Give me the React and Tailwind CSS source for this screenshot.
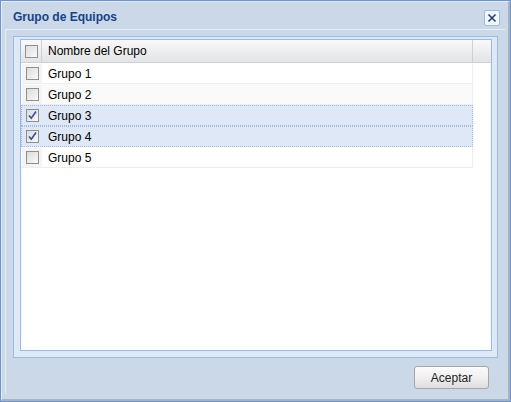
import React from 'react';

const grupos = [
  { id: 1, name: 'Grupo 1', checked: false },
  { id: 2, name: 'Grupo 2', checked: false },
  { id: 3, name: 'Grupo 3', checked: true },
  { id: 4, name: 'Grupo 4', checked: true },
  { id: 5, name: 'Grupo 5', checked: false },
];

// Little ExtJS-ish checkbox
const Check = ({ checked }) => (
  <div className="w-[13px] h-[13px] border border-[#8e8f8f] bg-gradient-to-br from-[#dcdcdc] to-[#f9f9f9] relative">
    {checked && (
      <svg className="absolute left-0 top-0" width="11" height="11" viewBox="0 0 11 11">
        <path d="M2 5.5 L4.3 8.2 L9 1.6" fill="none" stroke="#3453a6" strokeWidth="1.7" />
      </svg>
    )}
  </div>
);

const App = () => {
  return (
    <div className="w-[511px] h-[402px] border border-[#6a95cf] bg-[#cbd8e8] font-['Liberation_Sans',Arial,sans-serif]">
      <div className="h-full border-l border-t border-[#e3ebf5] border-r-[2px] border-b-[2px] border-r-[#a9b3bf] border-b-[#a9b3bf] flex flex-col">
        {/* title bar */}
        <div className="h-[27px] flex items-center justify-between pl-[11px] pr-[8px]">
          <span className="text-[12px] font-bold text-[#15428b] pt-[2px]">Grupo de Equipos</span>
          <button className="w-[16px] h-[16px] mt-[4px] rounded-[2px] border border-[#99bbe8] bg-[#f3f7fc] flex items-center justify-center">
            <svg width="10" height="10" viewBox="0 0 10 10">
              <path d="M1.5 1.5 L8.5 8.5 M8.5 1.5 L1.5 8.5" stroke="#1f3f84" strokeWidth="1.6" />
            </svg>
          </button>
        </div>

        {/* window frame */}
        <div className="flex-1 ml-[3px] mr-[3px] mb-[5px] border-l border-t border-[#e7eef7] flex flex-col">
          <div className="mx-[7px] mt-[6px] h-[322px] border border-[#99bbe8] bg-[#dfe8f6] pl-[6px] pr-[5px] pt-[2px]">
            <div className="h-[312px] border border-[#99bbe8] bg-white">
              {/* header */}
              <div className="flex h-[23px] border-b border-[#d0d0d0] bg-gradient-to-b from-[#f9f9f9] to-[#e3e4e6] text-[12px] text-black">
                <div className="w-[21px] border-r border-[#d0d0d0] flex items-center justify-center">
                  <Check checked={false} />
                </div>
                <div className="w-[431px] border-r border-[#d0d0d0] flex items-center pl-[6px]">Nombre del Grupo</div>
                <div className="flex-1" />
              </div>
              {/* rows */}
              <div className="w-[452px]">
                {grupos.map((g, i) => (
                  <div
                    key={g.id}
                    className={`flex h-[21px] text-[12px] text-black ${
                      g.checked
                        ? 'bg-[#dfe8f6] border border-dotted border-[#a3bae9]'
                        : `${i % 2 === 1 ? 'bg-[#fafafa]' : 'bg-white'} border border-transparent border-b-[#ededed] border-r-[#ededed]`
                    }`}
                  >
                    <div className={`w-[20px] flex items-center justify-center ${g.checked ? '' : 'bg-[#f4f4f4]'}`}>
                      <Check checked={g.checked} />
                    </div>
                    <div className="flex-1 flex items-center pl-[6px]">{g.name}</div>
                  </div>
                ))}
              </div>
            </div>
          </div>

          {/* footer */}
          <div className="flex-1 flex items-start justify-end pr-[16px] pt-[8px]">
            <button className="w-[75px] h-[23px] rounded-[3px] border border-[#a6a6a6] bg-gradient-to-b from-[#fbfbfb] via-[#f0f0f0] to-[#dedede] text-[12px] text-[#222]">
              Aceptar
            </button>
          </div>
        </div>
      </div>
    </div>
  );
};

export default App;
